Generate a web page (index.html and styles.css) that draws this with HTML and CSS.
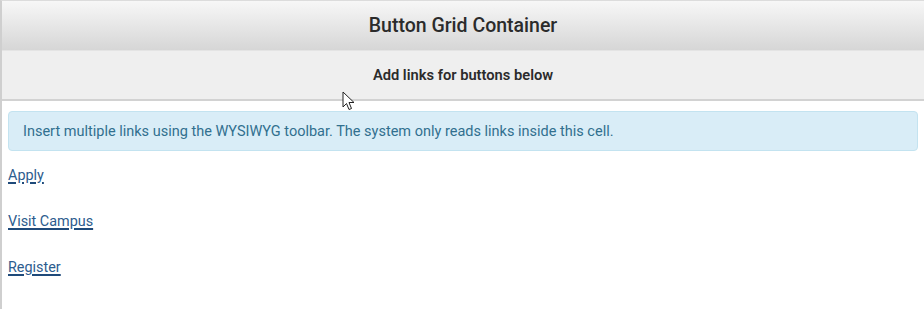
FILE: index.html
```html
<!DOCTYPE html>
<html>
<head>
<meta charset="utf-8">
<link rel="stylesheet" href="styles.css">
</head>
<body>
<div class="panel">
  <div class="panel-title">Button Grid Container</div>
  <div class="panel-sub">Add links for buttons below</div>
  <div class="panel-body">
    <div class="alert">Insert multiple links using the WYSIWYG toolbar. The system only reads links inside this cell.</div>
    <p class="link-row"><a href="#">Apply</a></p>
    <p class="link-row"><a href="#">Visit Campus</a></p>
    <p class="link-row"><a href="#">Register</a></p>
  </div>
</div>
<svg class="cursor" width="14" height="20" viewBox="0 0 14 20">
  <path d="M1 1 L1 16 L4.5 12.5 L7 18.5 L9.5 17.5 L7 11.5 L12 11.5 Z" fill="#fff" stroke="#222" stroke-width="1" stroke-linejoin="round"/>
</svg>
</body>
</html>
```
FILE: styles.css
```css
html, body {
  margin: 0;
  padding: 0;
  background: #fff;
}
body {
  font-family: Roboto, "Liberation Sans", sans-serif;
  color: #333;
  position: relative;
  height: 309px;
  overflow: hidden;
}
.panel {
  border-left: 2px solid #cfcfcf;
  border-top: 1px solid #dcdcdc;
  min-height: 308px;
}
.panel-title {
  height: 49px;
  background: linear-gradient(#f7f7f7, #d6d6d6);
  display: flex;
  align-items: center;
  justify-content: center;
  font-size: 19.5px;
  font-weight: 500;
  color: #2b2b2b;
}
.panel-sub {
  height: 48px;
  background: #efefef;
  border-top: 1px solid #e4e4e4;
  border-bottom: 2px solid #d2d2d2;
  display: flex;
  align-items: center;
  justify-content: center;
  font-size: 14.7px;
  font-weight: 600;
  color: #2b2b2b;
}
.panel-body {
  padding: 10px 6px 0 6px;
}
.alert {
  background: #d9edf7;
  border: 1px solid #c3e3f0;
  border-radius: 4px;
  color: #31708f;
  font-size: 14.5px;
  height: 38px;
  display: flex;
  align-items: center;
  padding: 0 14px;
  margin-bottom: 15px;
}
.link-row {
  margin: 0 0 26px 0;
  line-height: 20px;
  font-size: 14.4px;
}
.link-row a {
  color: #2d5c8e;
  text-decoration: underline;
  text-decoration-color: #1f4a7a;
  text-decoration-thickness: 2px;
  text-underline-offset: 2px;
}
.cursor {
  position: absolute;
  left: 342px;
  top: 91px;
}
```
